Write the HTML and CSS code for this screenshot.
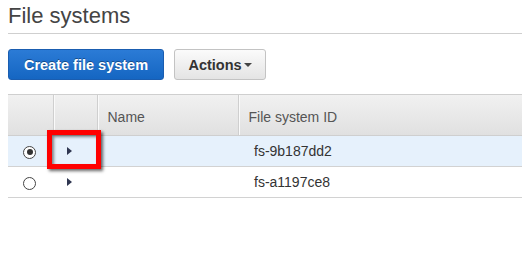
FILE: index.html
```html
<!DOCTYPE html>
<html>
<head>
<meta charset="utf-8">
<link rel="stylesheet" href="styles.css">
</head>
<body>
<div class="page">
  <h1 class="title">File systems</h1>
  <div class="toolbar">
    <button class="btn btn-primary">Create file system</button>
    <button class="btn btn-default">Actions<span class="caret"></span></button>
  </div>
  <table class="grid">
    <colgroup>
      <col class="c-sel"><col class="c-exp"><col class="c-name"><col class="c-id">
    </colgroup>
    <thead>
      <tr>
        <th></th>
        <th></th>
        <th>Name</th>
        <th>File system ID</th>
      </tr>
    </thead>
    <tbody>
      <tr class="selected">
        <td class="sel"><span class="radio checked"></span></td>
        <td class="exp"><div class="exp-inner"><span class="tri"></span><span class="highlight"></span></div></td>
        <td></td>
        <td class="id">fs-9b187dd2</td>
      </tr>
      <tr>
        <td class="sel"><span class="radio"></span></td>
        <td class="exp"><div class="exp-inner"><span class="tri"></span></div></td>
        <td></td>
        <td class="id">fs-a1197ce8</td>
      </tr>
    </tbody>
  </table>
</div>
</body>
</html>
```

FILE: styles.css
```css
html, body {
  margin: 0;
  padding: 0;
  background: #fff;
}
.page {
  padding: 3px 0 0 8px;
  font-family: Arial, "Liberation Sans", sans-serif;
  color: #333;
}
.title {
  margin: 0;
  font-size: 22px;
  font-weight: normal;
  line-height: 26px;
  padding-bottom: 4px;
  border-bottom: 1px solid #cfcfcf;
  color: #444;
}
.toolbar {
  display: flex;
  gap: 10px;
  margin-top: 15px;
}
.btn {
  height: 31px;
  box-sizing: border-box;
  border-radius: 3px;
  font-family: Arial, "Liberation Sans", sans-serif;
  font-size: 14.5px;
  font-weight: bold;
  padding: 0;
  display: flex;
  align-items: center;
  cursor: pointer;
}
.btn-primary {
  width: 156px;
  justify-content: center;
  color: #fff;
  background: linear-gradient(#2b7bd6, #1566c2);
  border: 1px solid #1a5db0;
  text-shadow: 0 -1px 0 rgba(0,0,0,0.35);
}
.btn-default {
  width: 92px;
  justify-content: center;
  color: #333;
  background: linear-gradient(#fbfbfb, #e4e4e4);
  border: 1px solid #c3c3c3;
}
.caret {
  display: inline-block;
  width: 0;
  height: 0;
  margin-left: 2px;
  margin-top: 1px;
  border-left: 4px solid transparent;
  border-right: 4px solid transparent;
  border-top: 4px solid #444;
}
.grid {
  margin-top: 14px;
  width: 514px;
  border-collapse: collapse;
  table-layout: fixed;
  font-size: 14px;
}
.c-sel { width: 45px; }
.c-exp { width: 44px; }
.c-name { width: 141px; }
.grid thead tr {
  background: linear-gradient(#f1f1f1, #e0e0e0);
}
.grid th {
  height: 37px;
  padding: 3px 0 0 10px;
  text-align: left;
  font-weight: normal;
  color: #555;
  border-top: 1px solid #cfcfcf;
  border-bottom: 1px solid #cfcfcf;
  border-left: 1px solid #cfcfcf;
  box-shadow: inset 1px 0 0 #fafafa;
}
.grid th:first-child {
  border-left: none;
  box-shadow: none;
}
.grid td {
  height: 30px;
  padding: 0;
  border-bottom: 1px solid #d2d2d2;
  color: #333;
}
.grid tr.selected td {
  background: #e6f1fc;
}
.grid td.sel {
  text-align: left;
  padding-left: 15px;
}
.exp-inner {
  position: relative;
  height: 30px;
  display: flex;
  align-items: center;
  padding-left: 14px;
}
.grid td.id {
  padding-left: 16px;
}
.radio {
  display: inline-block;
  width: 11px;
  height: 11px;
  border: 1px solid #444;
  border-radius: 50%;
  background: #fff;
  vertical-align: middle;
  position: relative;
}
.radio.checked::after {
  content: "";
  position: absolute;
  left: 2.5px;
  top: 2.5px;
  width: 6px;
  height: 6px;
  border-radius: 50%;
  background: #333;
}
.tri {
  display: block;
  width: 0;
  height: 0;
  border-top: 4px solid transparent;
  border-bottom: 4px solid transparent;
  border-left: 5px solid #2f3650;
}
.highlight {
  position: absolute;
  left: -6px;
  top: -6px;
  width: 44px;
  height: 29px;
  border: 5px solid #ff0000;
  box-shadow: 2px 2px 3px rgba(0,0,0,0.6), inset 2px 2px 3px rgba(0,0,0,0.45);
}
```
